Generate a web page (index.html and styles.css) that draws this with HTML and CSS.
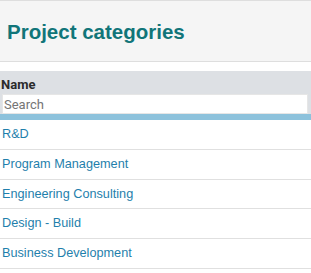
FILE: index.html
```html
<!DOCTYPE html>
<html lang="en">
<head>
  <meta charset="UTF-8" />
  <title>Project categories</title>
  <link rel="stylesheet" href="styles.css">
</head>
<body>

  <!-- Page title -->
  <div class="page-header">
    <h1>Project categories</h1>
  </div>

  <!-- Category grid -->
  <div class="grid">
    <div class="grid-head">
      <div class="col-title">Name</div>
      <input class="search" type="text" placeholder="Search">
    </div>
    <div class="grid-bar"></div>

    <ul class="rows">
      <li><a href="#">R&amp;D</a></li>
      <li><a href="#">Program Management</a></li>
      <li><a href="#">Engineering Consulting</a></li>
      <li><a href="#">Design - Build</a></li>
      <li><a href="#">Business Development</a></li>
    </ul>
  </div>

</body>
</html>
```

FILE: styles.css
```css
* {
  margin: 0;
  padding: 0;
  box-sizing: border-box;
}

body {
  font-family: "Liberation Sans", Arial, sans-serif;
  background: white;
  color: #333;
}

.page-header {
  height: 62px;
  background: #f5f5f5;
  border-top: 1px solid #dedede;
  border-bottom: 1px solid #dedede;
  display: flex;
  align-items: center;
  padding-left: 7px;
}

.page-header h1 {
  font-size: 20.5px;
  font-weight: bold;
  color: #117579;
  margin-top: 1px;
}

.grid {
  margin-top: 9px;
}

.grid-head {
  background: #dde0e4;
  padding: 5px 3px 0 2px;
}

.col-title {
  font-family: Roboto, sans-serif;
  font-weight: bold;
  font-size: 13px;
  line-height: 17px;
  color: #2b2b2b;
  margin-left: -1px;
}

.search {
  display: block;
  width: 100%;
  height: 20px;
  margin-top: 1px;
  border: 1px solid #e6e6e6;
  background: white;
  font-family: Roboto, sans-serif;
  font-size: 13px;
  padding: 0 1px;
  outline: none;
}

.search::placeholder {
  color: #757575;
}

.grid-bar {
  height: 6px;
  background: #8dc2dc;
}

.rows {
  list-style: none;
}

.rows li {
  padding: 6px 2px;
  line-height: 16.75px;
  border-bottom: 1px solid #e0e0e0;
  font-size: 12.7px;
}

.rows a {
  color: #1f7fac;
  text-decoration: none;
}
```
